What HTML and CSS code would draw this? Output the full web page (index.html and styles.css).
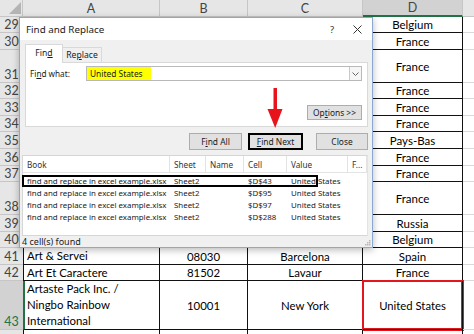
FILE: index.html
```html
<!DOCTYPE html>
<html>
<head>
<meta charset="utf-8">
<link rel="stylesheet" href="styles.css">
</head>
<body>
<div class="sheet">
  <div class="row hdr">
    <div class="corner"><svg width="12" height="12" viewBox="0 0 12 12"><polygon points="0,12 12,12 12,0" fill="#b4b4b4"/></svg></div>
    <div class="ch ca">A</div><div class="ch cb">B</div><div class="ch cc">C</div><div class="ch cd sel">D</div><div class="ch ce"></div>
  </div>
  <div class="row h16"><div class="rh">29</div><div class="cell ca"></div><div class="cell cb"></div><div class="cell cc"></div><div class="cell cd">Belgium</div><div class="cell ce"></div></div>
  <div class="row h17"><div class="rh">30</div><div class="cell ca"></div><div class="cell cb"></div><div class="cell cc"></div><div class="cell cd">France</div><div class="cell ce"></div></div>
  <div class="row h33"><div class="rh">31</div><div class="cell ca"></div><div class="cell cb"></div><div class="cell cc"></div><div class="cell cd">France</div><div class="cell ce"></div></div>
  <div class="row h16"><div class="rh">32</div><div class="cell ca"></div><div class="cell cb"></div><div class="cell cc"></div><div class="cell cd">France</div><div class="cell ce"></div></div>
  <div class="row h17"><div class="rh">33</div><div class="cell ca"></div><div class="cell cb"></div><div class="cell cc"></div><div class="cell cd">France</div><div class="cell ce"></div></div>
  <div class="row h16"><div class="rh">34</div><div class="cell ca"></div><div class="cell cb"></div><div class="cell cc"></div><div class="cell cd">France</div><div class="cell ce"></div></div>
  <div class="row h17"><div class="rh">35</div><div class="cell ca"></div><div class="cell cb"></div><div class="cell cc"></div><div class="cell cd">Pays-Bas</div><div class="cell ce"></div></div>
  <div class="row h17"><div class="rh">36</div><div class="cell ca"></div><div class="cell cb"></div><div class="cell cc"></div><div class="cell cd">France</div><div class="cell ce"></div></div>
  <div class="row h16"><div class="rh">37</div><div class="cell ca"></div><div class="cell cb"></div><div class="cell cc"></div><div class="cell cd">France</div><div class="cell ce"></div></div>
  <div class="row h33"><div class="rh">38</div><div class="cell ca"></div><div class="cell cb"></div><div class="cell cc"></div><div class="cell cd">France</div><div class="cell ce"></div></div>
  <div class="row h17"><div class="rh">39</div><div class="cell ca"></div><div class="cell cb"></div><div class="cell cc"></div><div class="cell cd">Russia</div><div class="cell ce"></div></div>
  <div class="row h16"><div class="rh">40</div><div class="cell ca"></div><div class="cell cb"></div><div class="cell cc"></div><div class="cell cd">Belgium</div><div class="cell ce"></div></div>
  <div class="row h17"><div class="rh">41</div><div class="cell ca">Art &amp; Servei</div><div class="cell cb">08030</div><div class="cell cc">Barcelona</div><div class="cell cd">Spain</div><div class="cell ce"></div></div>
  <div class="row h16"><div class="rh">42</div><div class="cell ca">Art Et Caractere</div><div class="cell cb">81502</div><div class="cell cc">Lavaur</div><div class="cell cd">France</div><div class="cell ce"></div></div>
  <div class="row h49"><div class="rh sel">43</div><div class="cell ca sel">Artaste Pack Inc. /<br>Ningbo Rainbow<br>International</div><div class="cell cb">10001</div><div class="cell cc">New York</div><div class="cell cd mark">United States</div><div class="cell ce"></div></div>
  <div class="row h20"><div class="rh"></div><div class="cell ca"></div><div class="cell cb"></div><div class="cell cc"></div><div class="cell cd"></div><div class="cell ce"></div></div>
</div>

<div class="dialog">
  <div class="title">
    <span class="title-txt">Find and Replace</span>
    <span class="help">?</span>
    <span class="xbtn"><svg width="9" height="9" viewBox="0 0 9 9"><path d="M0.5 0.5 L8.5 8.5 M8.5 0.5 L0.5 8.5" stroke="#333" stroke-width="1" fill="none"/></svg></span>
  </div>
  <div class="tabs">
    <div class="tab on">Fin<u>d</u></div>
    <div class="tab">Re<u>p</u>lace</div>
  </div>
  <div class="panel">
    <div class="findrow">
      <span class="label">Fi<u>n</u>d what:</span>
      <div class="input">
        <span class="hl">United States</span>
        <span class="dd"><svg width="7" height="4" viewBox="0 0 7 4"><path d="M0.5 0.5 L3.5 3.5 L6.5 0.5" stroke="#666" fill="none" stroke-width="1"/></svg></span>
      </div>
    </div>
    <div class="optrow"><div class="btn opt">Op<u>t</u>ions &gt;&gt;</div></div>
  </div>
  <div class="btnrow">
    <div class="btn findall">F<u>i</u>nd All</div>
    <div class="btn findnext"><u>F</u>ind Next</div>
    <div class="btn close">Close</div>
  </div>
  <div class="list">
    <div class="lhead">
      <span>Book</span><span>Sheet</span><span>Name</span><span>Cell</span><span>Value</span><span>F...</span>
    </div>
    <div class="lrows">
      <div class="lr picked"><span>find and replace in excel example.xlsx</span><span>Sheet2</span><span></span><span>$D$43</span><span>United States</span><span></span></div>
      <div class="lr"><span>find and replace in excel example.xlsx</span><span>Sheet2</span><span></span><span>$D$95</span><span>United States</span><span></span></div>
      <div class="lr"><span>find and replace in excel example.xlsx</span><span>Sheet2</span><span></span><span>$D$97</span><span>United States</span><span></span></div>
      <div class="lr"><span>find and replace in excel example.xlsx</span><span>Sheet2</span><span></span><span>$D$288</span><span>United States</span><span></span></div>
    </div>
  </div>
  <div class="status">
    <span>4 cell(s) found</span>
    <svg class="grip" width="7" height="7" viewBox="0 0 7 7"><g fill="#b8b8b8"><rect x="5" y="1" width="1.5" height="1.5"/><rect x="3" y="3" width="1.5" height="1.5"/><rect x="5" y="3" width="1.5" height="1.5"/><rect x="1" y="5" width="1.5" height="1.5"/><rect x="3" y="5" width="1.5" height="1.5"/><rect x="5" y="5" width="1.5" height="1.5"/></g></svg>
  </div>
</div>

<svg class="arrow" width="18" height="44" viewBox="0 0 18 44">
  <rect x="7.5" y="2" width="3.5" height="24" fill="#e8141c"/>
  <polygon points="1.5,23 16.5,23 9.2,42" fill="#e8141c"/>
</svg>
</body>
</html>
```

FILE: styles.css
```css
html, body {
  margin: 0;
  padding: 0;
}
body {
  width: 474px;
  height: 334px;
  overflow: hidden;
  position: relative;
  background: #fff;
  font-family: Lato, "Liberation Sans", sans-serif;
}

/* ---------- spreadsheet ---------- */
.sheet {
  display: flex;
  flex-direction: column;
}
.row {
  display: flex;
  flex: none;
}
.hdr { height: 17px; }
.h16 { height: 16px; }
.h17 { height: 17px; }
.h33 { height: 33px; }
.h49 { height: 49px; }
.h20 { height: 20px; }

.corner {
  width: 23px;
  flex: none;
  box-sizing: border-box;
  background: #e6e6e6;
  border-right: 1px solid #c6c6c6;
  border-bottom: 1px solid #c6c6c6;
  display: flex;
  align-items: flex-end;
  justify-content: flex-end;
  padding: 0 1px 2px 0;
}
.ch {
  box-sizing: border-box;
  flex: none;
  background: #e6e6e6;
  border-right: 1px solid #c6c6c6;
  border-bottom: 1px solid #c6c6c6;
  display: flex;
  align-items: center;
  justify-content: center;
  font-size: 12.5px;
  color: #444;
}
.ch.sel {
  background: #d2d2d2;
  border-bottom: 2px solid #217346;
}
.ch.ce { border-right: none; }

.rh {
  width: 23px;
  flex: none;
  box-sizing: border-box;
  background: #e6e6e6;
  border-bottom: 1px solid #c6c6c6;
  display: flex;
  align-items: flex-end;
  justify-content: center;
  font-size: 12.5px;
  line-height: 15px;
  color: #444;
}
.rh.sel {
  background: #d2d2d2;
  color: #217346;
}

.cell {
  box-sizing: border-box;
  flex: none;
  border-right: 1px solid #111;
  border-bottom: 1px solid #111;
  display: flex;
  align-items: center;
  justify-content: center;
  font-size: 11.5px;
  color: #000;
  white-space: nowrap;
}
.ca { width: 137px; }
.cb { width: 88px; }
.cc { width: 115px; }
.cd { width: 100px; }
.ce { flex: 1; }

.cell.ca {
  border-left: 1px solid #111;
  justify-content: flex-start;
  padding-left: 3px;
  line-height: 16px;
  font-size: 11.4px;
}
.cell.ca.sel { border-left: 2px solid #217346; padding-left: 2px; }
.cell.cb, .cell.cc { font-size: 11.4px; }
.cell.ce {
  border-right: none;
  border-bottom: 1px solid #d9d9d9;
}
.cell.mark {
  box-shadow: 0 0 0 1px #e3161e, inset 0 0 0 1px #e3161e;
  font-size: 11.3px;
}

/* ---------- dialog ---------- */
.dialog {
  position: absolute;
  left: 19px;
  top: 17px;
  width: 354px;
  height: 231px;
  box-sizing: border-box;
  border: 1px solid #8aa8d2;
  background: #f0f0f0;
  box-shadow: 0 2px 7px rgba(0, 0, 0, 0.28);
  display: flex;
  flex-direction: column;
  font-family: "Noto Sans", "Open Sans", sans-serif;
  font-size: 8.2px;
  color: #1a1a1a;
}
.dialog u { text-decoration: underline; text-underline-offset: 1px; }

.title {
  height: 22px;
  flex: none;
  background: #fff;
  display: flex;
  align-items: center;
  padding-left: 6px;
  font-size: 9.8px;
}
.title-txt { flex: 1; }
.help {
  width: 20px;
  text-align: center;
  font-size: 9.5px;
  color: #333;
}
.xbtn {
  width: 30px;
  display: flex;
  justify-content: center;
  align-items: center;
}

.tabs {
  display: flex;
  align-items: flex-end;
  height: 18px;
  margin: 4px 0 0 5px;
  position: relative;
  z-index: 1;
  flex: none;
}
.tab {
  box-sizing: border-box;
  width: 39px;
  height: 15px;
  border: 1px solid #d9d9d9;
  border-bottom: none;
  border-left: none;
  background: #f0f0f0;
  display: flex;
  align-items: center;
  justify-content: center;
  font-size: 8.6px;
}
.tab.on {
  width: 38px;
  height: 19px;
  margin-bottom: -1px;
  background: #fff;
  border-left: 1px solid #d9d9d9;
  padding-bottom: 2px;
}

.panel {
  flex: none;
  margin-left: 5px;
  width: 343px;
  height: 65px;
  box-sizing: border-box;
  background: #fff;
  border: 1px solid #d9d9d9;
  padding: 3px 5px 6px 4px;
  display: flex;
  flex-direction: column;
  justify-content: space-between;
}
.findrow {
  display: flex;
  align-items: center;
  height: 15px;
}
.label { width: 56px; flex: none; }
.input {
  flex: 1;
  height: 15px;
  box-sizing: border-box;
  border: 1px solid #b9b9b9;
  background: #fff;
  display: flex;
  align-items: stretch;
}
.hl {
  background: #ffff00;
  width: 64px;
  box-sizing: border-box;
  padding-left: 3px;
  display: flex;
  align-items: center;
  font-size: 8.4px;
}
.dd {
  margin-left: auto;
  width: 11px;
  border-left: 1px solid #c9c9c9;
  background: #f6f6f6;
  display: flex;
  align-items: center;
  justify-content: center;
}
.optrow {
  display: flex;
  justify-content: flex-end;
}

.btn {
  box-sizing: border-box;
  background: #e1e1e1;
  border: 1px solid #adadad;
  display: flex;
  align-items: center;
  justify-content: center;
  font-size: 8.4px;
}
.opt { width: 55px; height: 15px; }

.btnrow {
  flex: none;
  display: flex;
  justify-content: flex-end;
  height: 17px;
  margin-top: 6px;
  padding-right: 4px;
}
.btnrow .btn { height: 17px; }
.findall { width: 53px; margin-right: 6px; }
.findnext { width: 55px; margin-right: 13px; border: 2px solid #000; }
.close { width: 52px; }

.list {
  flex: 1;
  margin: 5px 0 0 2px;
  width: 346px;
  box-sizing: border-box;
  background: #fff;
  border: 1px solid #d6d6d6;
  border-right-color: #e3e3e3;
  font-size: 7.9px;
}
.lhead, .lr {
  display: grid;
  grid-template-columns: 147px 36px 38px 43px 61px 1fr;
}
.lhead {
  height: 16px;
  border-bottom: 1px solid #e3e3e3;
  color: #333;
  font-size: 8.2px;
}
.lhead span {
  border-right: 1px solid #e3e3e3;
  padding-left: 4px;
  display: flex;
  align-items: center;
}
.lrows { padding-top: 2px; }
.lr {
  height: 12px;
  align-items: center;
  position: relative;
  color: #1a1a1a;
}
.lr span {
  padding-left: 4px;
  white-space: nowrap;
  overflow: hidden;
}
.lr.picked::after {
  content: "";
  position: absolute;
  left: -1px;
  top: 0;
  width: 296px;
  height: 12px;
  box-sizing: border-box;
  border: 2px solid #000;
}

.status {
  flex: none;
  height: 11px;
  display: flex;
  align-items: center;
  padding-left: 2px;
  font-size: 9px;
  position: relative;
}
.grip {
  position: absolute;
  right: 1px;
  bottom: 1px;
}

.arrow {
  position: absolute;
  left: 266px;
  top: 86px;
}
```
